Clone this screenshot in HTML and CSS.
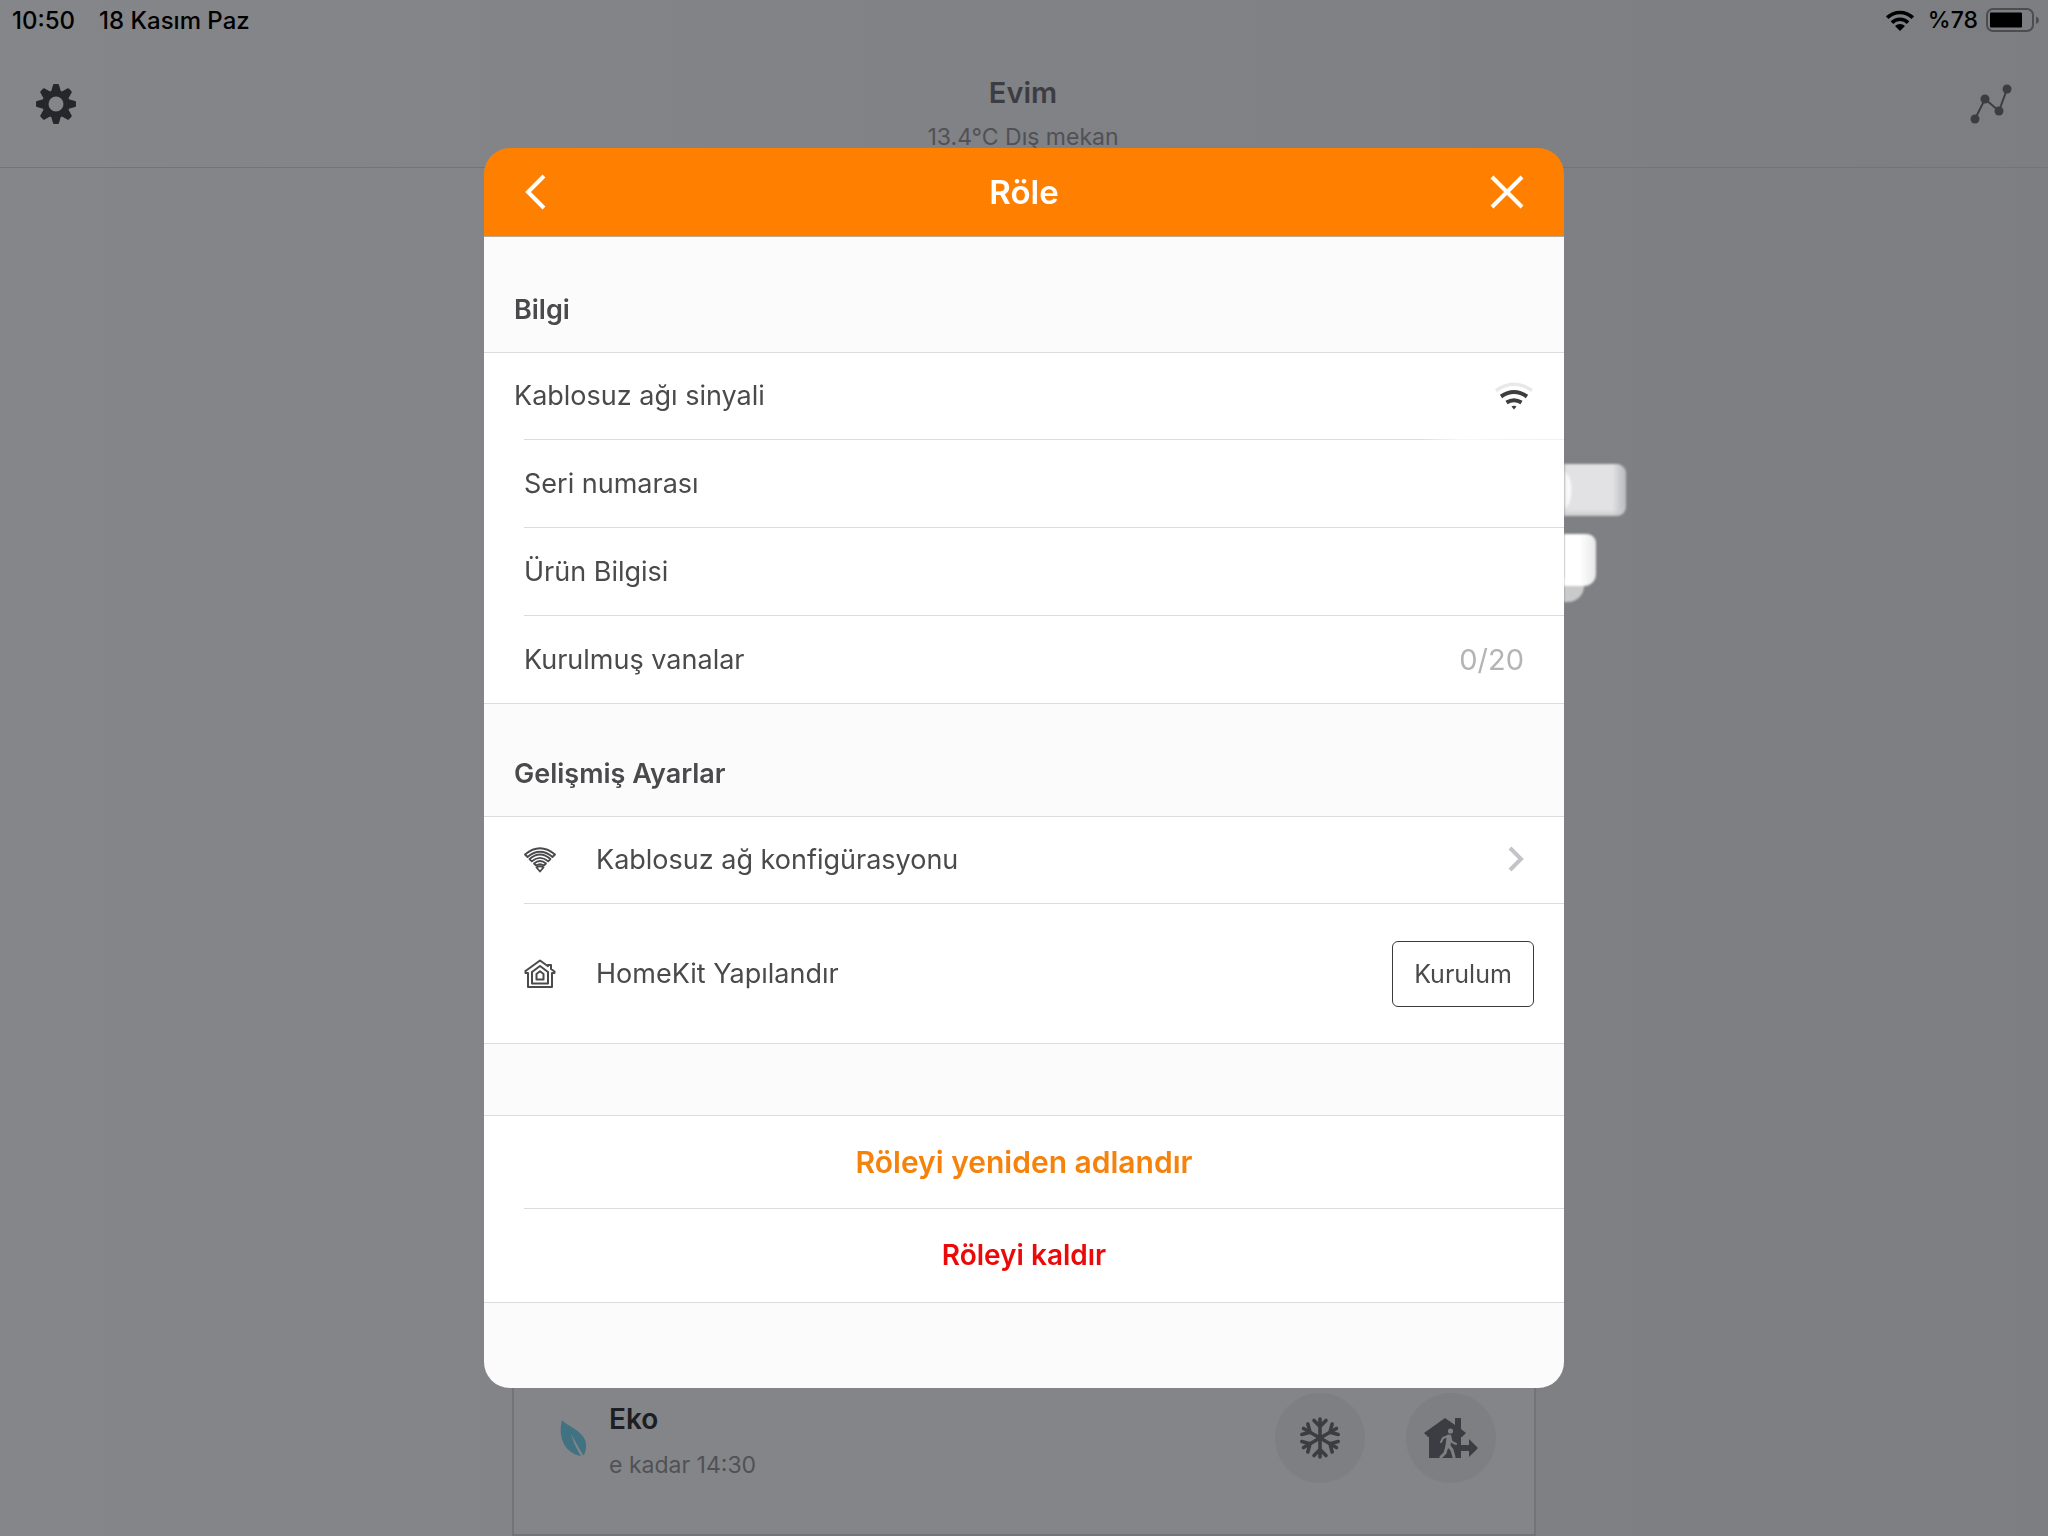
FILE: index.html
```html
<!DOCTYPE html>
<html lang="tr">
<head>
<meta charset="utf-8">
<meta name="viewport" content="width=device-width, initial-scale=1">
<title>Röle</title>
<link rel="stylesheet" href="styles.css">
</head>
<body>
<div class="app">
  <div class="status">
    <div class="status-group"><span>10:50</span><span>18 Kasım Paz</span></div>
    <div class="status-side">
      <svg class="status-wifi" width="28" height="21" viewBox="0 0 28 21" aria-hidden="true">
        <path d="M14 21l-5-5a7.500 7.500 0 0 1 10 0z"/>
        <g fill="none" stroke="currentColor" stroke-width="3.600">
          <path d="M1.200 7.700a18.300 18.300 0 0 1 25.600 0"/>
          <path d="M5.900 12.600a11.500 11.500 0 0 1 16.200 0"/>
        </g>
      </svg>
      <span class="percent">%78</span>
      <svg width="54" height="24" viewBox="0 0 54 24" aria-hidden="true">
        <rect x="1" y="1" width="46" height="22" rx="6" fill="none" stroke="#4c4d50" stroke-width="2"/>
        <rect x="4" y="4.500" width="32" height="15" rx="1"/>
        <path d="M50 8.500c4 1.500 4 6 0 7.500z" fill="#4c4d50"/>
      </svg>
    </div>
  </div>
  <header class="home-header">
    <button class="icon-button" type="button" aria-label="Ayarlar">
      <svg width="40" height="40" viewBox="-20 -20 40 40" fill="#25272c" aria-hidden="true">
        <g id="teeth">
          <path id="tooth" d="M-5-12l2-7q.2-1 1.200-1h3.600q1 0 1.200 1l2 7z"/>
          <use href="#tooth" transform="rotate(45)"/><use href="#tooth" transform="rotate(90)"/><use href="#tooth" transform="rotate(135)"/>
          <use href="#tooth" transform="rotate(180)"/><use href="#tooth" transform="rotate(225)"/><use href="#tooth" transform="rotate(270)"/><use href="#tooth" transform="rotate(315)"/>
        </g>
        <circle r="10.600" fill="none" stroke="#25272c" stroke-width="6.200"/>
      </svg>
    </button>
    <div class="home-title">
      <h1>Evim</h1>
      <p>13.4°C Dış mekan</p>
    </div>
    <button class="icon-button" type="button" aria-label="Rapor">
      <svg width="42" height="40" viewBox="0 0 42 40" fill="#3c3d42" aria-hidden="true">
        <path d="M5 35L15 15l14 12L37 5" fill="none" stroke="#3c3d42" stroke-width="2"/>
        <circle cx="5" cy="35" r="4.500"/><circle cx="15" cy="15" r="4.500"/><circle cx="29" cy="27" r="4.500"/><circle cx="37" cy="5" r="4.500"/>
      </svg>
    </button>
  </header>
  <main class="home">
    <section class="card">
      <svg class="leaf" width="28" height="38" viewBox="0 0 28 38" fill="#417282" aria-hidden="true">
        <path d="M3 1c5 6 19 10 23 20 2 5 1 10-1 15h-1C20 29 16 22 12 15c2 7 5 14 10 22C8 35-2 21 3 1z"/>
      </svg>
      <div class="card-text"><h2>Eko</h2><p>e kadar 14:30</p></div>
      <button class="round" type="button" aria-label="Donma koruması">
        <svg width="44" height="44" viewBox="-22 -22 44 44" fill="none" stroke="#3c3d42" stroke-width="3.600" stroke-linecap="round" aria-hidden="true">
          <path id="arm" d="M0 0V-19M-6-17.500L0-11.500L6-17.500"/>
          <use href="#arm" transform="rotate(60)"/><use href="#arm" transform="rotate(120)"/><use href="#arm" transform="rotate(180)"/><use href="#arm" transform="rotate(240)"/><use href="#arm" transform="rotate(300)"/>
        </svg>
      </button>
      <button class="round" type="button" aria-label="Dışarıda">
        <svg width="54" height="42" viewBox="0 0 54 42" aria-hidden="true">
          <path fill="#3c3d42" d="M0 16L21 1l10 7V1h6v11l5 4-4 4h-1v8h8v-6l9 9-9 9v-6h-8v7H5V20H4z"/>
          <g fill="none" stroke="#7e7f82" stroke-linecap="round" stroke-linejoin="round">
            <circle cx="26.500" cy="14" r="2.600" fill="#7e7f82" stroke="none"/>
            <path d="M25 20l-1 9" stroke-width="5"/>
            <path d="M24 19l-5 2-2 4M26 20l2 5 4 2" stroke-width="2"/>
            <path d="M23 29l-2 7-4 4M25 29l3 4 2 7" stroke-width="3"/>
          </g>
        </svg>
      </button>
    </section>
  </main>
</div>

<div class="overlay">
  <div class="modal" role="dialog" aria-labelledby="modal-title">
    <header class="modal-header">
      <button class="icon-button" type="button" aria-label="Geri">
        <svg width="24" height="38" viewBox="0 0 24 38" fill="none" stroke="#fff" stroke-width="4" aria-hidden="true"><path d="M20 3L4 19l16 16"/></svg>
      </button>
      <h2 id="modal-title">Röle</h2>
      <button class="icon-button" type="button" aria-label="Kapat">
        <svg width="34" height="34" viewBox="0 0 34 34" fill="none" stroke="#fff" stroke-width="4" aria-hidden="true"><path d="M2 2l30 30M32 2L2 32"/></svg>
      </button>
    </header>

    <h3 class="section-title">Bilgi</h3>
    <ul class="list">
      <li class="row row-signal">
        <span>Kablosuz ağı sinyali</span>
        <svg width="40" height="30" viewBox="0 0 40 30" fill="none" stroke="#3d3d3f" stroke-width="4" aria-hidden="true">
          <path d="M2 9.500Q20-3 38 9.500" stroke="#e8e8e8" stroke-width="3.500"/>
          <path d="M7 15.500q13-9 26 0"/><path d="M12.500 21.500q7.500-4.500 15 0"/>
          <path d="M17.500 25.500q2.500-1.500 5 0L20 28.500z" fill="#3d3d3f" stroke="none"/>
        </svg>
      </li>
      <li class="row"><span>Seri numarası</span><i class="smear smear-serial"></i></li>
      <li class="row"><span>Ürün Bilgisi</span><i class="smear smear-tail"></i><i class="smear smear-product"></i></li>
      <li class="row"><span>Kurulmuş vanalar</span><span class="value">0/20</span></li>
    </ul>

    <h3 class="section-title">Gelişmiş Ayarlar</h3>
    <ul class="list">
      <li class="row row-link">
        <a href="#wifi">
          <svg class="row-icon" width="32" height="26" viewBox="0 0 32 26" fill="none" stroke="#4a4a4c" stroke-width="1.800" stroke-linejoin="round" aria-hidden="true">
            <path d="M1 7.500Q16-5 31 7.500L28.500 10Q16-.5 3.500 10z"/>
            <path d="M5.500 12Q16 3 26.500 12L24.200 14.300Q16 7.500 7.800 14.300z"/>
            <path d="M10 16.500q6-5 12 0l-2.200 2.200q-3.800-3-7.600 0z"/>
            <path d="M12.500 20.500q3.500-2.500 7 0L16 24.500z"/>
          </svg>
          <span>Kablosuz ağ konfigürasyonu</span>
          <svg class="chevron" width="18" height="28" viewBox="0 0 18 28" fill="none" stroke="#c4c4c8" stroke-width="4" aria-hidden="true"><path d="M4 2l11 11L4 24"/></svg>
        </a>
      </li>
      <li class="row row-homekit">
        <svg class="row-icon" width="32" height="30" viewBox="0 0 32 30" fill="none" stroke="#4a4a4c" stroke-width="2" stroke-linejoin="round" aria-hidden="true">
          <path d="M4 14H1.500v-2L16 1.500l8 5.700V6h3v4l3.500 2.500V14H28v14H4z"/>
          <path d="M8 24.500V13l8-6 8 6v11.500z"/>
          <path d="M12.500 20.500V15l3.500-2.700 3.500 2.700v5.500z"/>
        </svg>
        <span>HomeKit Yapılandır</span>
        <button class="setup" type="button">Kurulum</button>
      </li>
    </ul>

    <div class="spacer"></div>
    <div class="list actions">
      <button class="action rename" type="button">Röleyi yeniden adlandır</button>
      <button class="action remove" type="button">Röleyi kaldır</button>
    </div>
    <div class="modal-footer"></div>
  </div>
</div>
</body>
</html>
```
FILE: styles.css
```css
* { box-sizing: border-box; }

body {
  margin: 0;
  font-family: Inter, "Open Sans", sans-serif;
  font-size: 27px;
  color: #4a4a4c;
}

h1, h2, h3, p, ul { margin: 0; padding: 0; font-weight: 400; }
ul { list-style: none; }
svg { display: block; flex: none; }
button { font: inherit; color: inherit; background: none; border: 0; padding: 0; cursor: pointer; }
a { color: inherit; text-decoration: none; }

/* Dimmed home screen */
.app {
  min-height: 100vh;
  display: flex;
  flex-direction: column;
  background: linear-gradient(90deg, #858689, #7d7e81);
}

.status {
  height: 40px;
  padding: 0 8px 0 12px;
  display: flex;
  align-items: center;
  justify-content: space-between;
  font-size: 24px;
  font-weight: 500;
  color: #000;
}
.status-group { display: flex; gap: 24px; }
.status-side { display: flex; align-items: center; gap: 8px; }
.status-wifi { margin-right: 6px; }
.percent { font-size: 23px; }

.home-header {
  height: 128px;
  padding: 0 36px;
  display: flex;
  align-items: center;
  justify-content: space-between;
  border-bottom: 1px solid #737477;
}
.home-title { text-align: center; padding-top: 22px; }
.home-title h1 { font-size: 29px; line-height: 44px; font-weight: 600; color: #3c3d42; }
.home-title p { font-size: 23px; line-height: 44px; color: #505156; }

.home {
  flex: 1;
  display: flex;
  flex-direction: column;
  justify-content: flex-end;
  align-items: center;
}
.card {
  width: 50%;
  height: 196px;
  padding: 0 38px 0 45px;
  display: flex;
  align-items: center;
  border: 2px solid #737477;
  background: #848588;
}
.card-text { flex: 1; margin-left: 22px; padding-top: 8px; }
.card-text h2 { font-size: 28px; line-height: 46px; font-weight: 600; color: #1c1e24; }
.card-text p { font-size: 23px; line-height: 46px; color: #505156; }
.round {
  width: 90px;
  height: 90px;
  margin-left: 41px;
  border-radius: 50%;
  background: #7e7f82;
  display: grid;
  place-items: center;
}

/* Dialog */
.overlay {
  position: fixed;
  inset: 0;
  display: grid;
  place-items: center;
}
.modal { width: min(1080px, 92vw); }

.modal-header {
  height: 89px;
  padding: 0 40px;
  display: grid;
  grid-template-columns: 1fr auto 1fr;
  align-items: center;
  background: #ff8000;
  border-bottom: 1px solid #b9a99a;
  border-radius: 26px 26px 0 0;
  color: #fff;
}
.modal-header h2 { font-size: 33px; font-weight: 600; }
.modal-header .icon-button { justify-self: start; }
.modal-header .icon-button:last-child { justify-self: end; }

.section-title {
  height: 115px;
  padding: 30px 30px 0;
  display: flex;
  align-items: center;
  background: #fbfbfb;
  font-size: 27px;
  line-height: 36px;
  font-weight: 600;
  color: #4a4a4c;
}
.list + .section-title { height: 112px; padding-top: 28px; }

.list {
  background: #fff;
  border: solid #dcdcdc;
  border-width: 1px 0;
}
.row {
  position: relative;
  height: 88px;
  margin-left: 40px;
  padding-right: 40px;
  display: flex;
  align-items: center;
  justify-content: space-between;
  line-height: 36px;
}
.row + .row { border-top: 1px solid #dcdcdc; }
.row-signal { height: 86px; margin-left: 30px; padding-right: 30px; }
.row-signal + .row {
  border-color: transparent;
  background: linear-gradient(90deg, #dcdcdc 86%, #f6f6f6 90%, #f0f0f0) 0 0 / 100% 1px no-repeat border-box;
}
.value { font-size: 29px; color: #b4b4b4; }

.smear {
  position: absolute;
  left: 100%;
  filter: blur(1px);
  clip-path: inset(-4px -4px -4px 0);
}
.smear-serial {
  top: 24px;
  width: 62px;
  height: 52px;
  border-radius: 0 9px 9px 0;
  background: radial-gradient(ellipse 8px 20px at left, #fbfbfb 80%, transparent), linear-gradient(90deg, #e2e2e4 78%, #b6b7b9);
  box-shadow: inset 0 -3px 4px #c8c9ca;
}
.smear-product {
  top: 6px;
  width: 32px;
  height: 52px;
  border-radius: 0 9px 12px 0;
  background: linear-gradient(90deg, #fff 50%, #e6e6e7);
}
.smear-tail {
  top: 50px;
  width: 20px;
  height: 24px;
  border-radius: 0 0 16px 0;
  background: #c9cacb;
}

.row-link { height: 86px; }
.row-link a { flex: 1; display: flex; align-items: center; }
.row-icon { margin-right: 40px; }
.chevron { margin-left: auto; }
.row-homekit { height: 140px; justify-content: flex-start; padding-right: 30px; }
.setup {
  width: 142px;
  height: 66px;
  margin-left: auto;
  border: 1px solid #3a3a3c;
  border-radius: 6px;
  font-size: 25px;
}

.spacer { height: 71px; background: #fbfbfb; }
.actions { display: flex; flex-direction: column; align-items: stretch; }
.action { height: 92px; font-size: 28px; font-weight: 600; }
.rename { font-size: 30px; color: #f5820b; }
.remove {
  height: 94px;
  color: #ea0a0a;
  background: linear-gradient(#dcdcdc, #dcdcdc) 40px 0 / 100% 1px no-repeat;
}
.modal-footer { height: 85px; background: #fbfbfb; border-radius: 0 0 26px 26px; }
```
